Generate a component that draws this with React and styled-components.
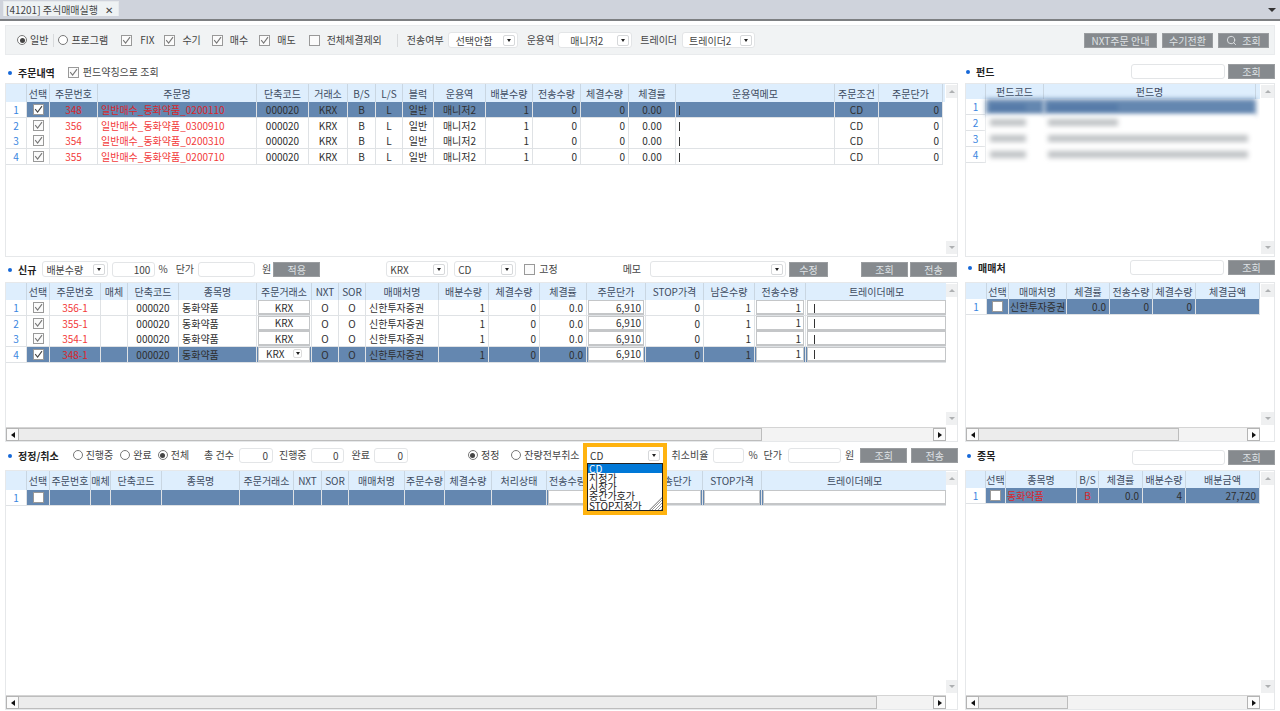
import React from 'react';
import styled, { createGlobalStyle } from 'styled-components';
import { Search } from 'lucide-react';

const GlobalStyle = createGlobalStyle`
    html, body {
        margin: 0;
        padding: 0;
        background: #fff;
    }
    body {
        font-family: "Noto Sans CJK KR", "Noto Sans", sans-serif;
        font-size: 10px;
        color: #333;
        overflow: hidden;
    }
    * { box-sizing: border-box; }
`;

const Page = styled.div`
    position: relative;
    width: 1280px;
    height: 711px;
    overflow: hidden;
`;

const TabBar = styled.div`
    display: flex;
    align-items: flex-end;
    justify-content: space-between;
    height: 21px;
    padding: 0 4px 3px 3px;
    background: #cfd3dc;
    border-bottom: 2px solid #7d7f82;
`;

const Tab = styled.div`
    display: flex;
    align-items: center;
    justify-content: space-between;
    width: 116px;
    height: 15px;
    padding: 0 5px 0 2px;
    background: #eef2f4;
    border: 1px solid #e6e9ec;
    border-bottom: 0;
    font-size: 10px;
    color: #444;
    white-space: nowrap;
`;

const TabMenu = styled.span`
    width: 0;
    height: 0;
    margin-bottom: 4px;
    border-left: 4px solid transparent;
    border-right: 4px solid transparent;
    border-top: 4px solid #333;
`;

const MainBar = styled.div`
    display: flex;
    align-items: center;
    height: 30px;
    margin: 4px 5px 0;
    padding: 0 5px 0 6px;
    background: #f1f3f4;
    border: 1px solid #e9ebed;
`;

const Columns = styled.div`
    display: flex;
    gap: 7px;
    padding-left: 5px;
`;

const Col = styled.div`
    display: flex;
    flex-direction: column;
    width: ${p => p.$w}px;
    flex: none;
`;

const SectionBar = styled.div`
    display: flex;
    align-items: center;
    height: ${p => p.$h}px;
    padding-bottom: ${p => p.$pb || 0}px;
    padding-top: ${p => p.$pt || 0}px;
    padding-left: ${p => p.$pl ?? 3}px;
`;

const Title = styled.span`
    position: relative;
    padding-left: 10px;
    margin-left: ${p => p.$ml || 0}px;
    margin-bottom: ${p => p.$mb || 0}px;
    font-weight: 700;
    font-size: 10px;
    color: #222;
    white-space: nowrap;
    &::before {
        content: '';
        position: absolute;
        left: 0;
        top: 6px;
        width: 4px;
        height: 4px;
        border-radius: 50%;
        background: #1668d8;
    }
`;

const Label = styled.span`
    margin-left: ${p => p.$ml || 0}px;
    color: #444;
    white-space: nowrap;
    line-height: 14px;
`;

const Divider = styled.span`
    width: 1px;
    height: 13px;
    margin-left: ${p => p.$ml || 0}px;
    background: #d8dadc;
`;

const Spring = styled.span`
    flex: 1;
`;

const RadioDot = styled.span`
    flex: none;
    width: 10px;
    height: 10px;
    margin-left: ${p => p.$ml || 0}px;
    margin-right: 3px;
    border: 1px solid #777;
    border-radius: 50%;
    background: #fff;
    display: flex;
    align-items: center;
    justify-content: center;
    &::after {
        content: '';
        display: ${p => (p.$on ? 'block' : 'none')};
        width: 5px;
        height: 5px;
        border-radius: 50%;
        background: #444;
    }
`;

const CheckBox = styled.span`
    flex: none;
    display: flex;
    align-items: center;
    justify-content: center;
    width: ${p => p.$size || 11}px;
    height: ${p => p.$size || 11}px;
    margin-left: ${p => p.$ml || 0}px;
    margin-right: ${p => p.$mr || 0}px;
    border: 1px solid #999;
    background: ${p => (p.$white ? '#fff' : '#fbfbfb')};
`;

const Check = ({ on, white, ml, mr }) => (
    <CheckBox $white={white} $ml={ml} $mr={mr}>
        {on && (
            <svg width="9" height="9" viewBox="0 0 9 9">
                <polyline points="1.2,4.2 3.6,7 8,1.2" fill="none" stroke={white ? '#444' : '#777'} strokeWidth="1.1" />
            </svg>
        )}
    </CheckBox>
);

const SelectBox = styled.div`
    flex: none;
    display: flex;
    align-items: center;
    justify-content: space-between;
    width: ${p => p.$w}px;
    height: 16px;
    margin-left: ${p => p.$ml || 0}px;
    padding: 0 2px 0 ${p => p.$pl ?? 3}px;
    background: #fff;
    border: 1px solid #e3e5e7;
    border-radius: 3px;
    color: #444;
    white-space: nowrap;
`;

const SelectArrow = styled.span`
    flex: none;
    display: flex;
    align-items: center;
    justify-content: center;
    width: 12px;
    height: 11px;
    background: #fff;
    border: 1px solid #d6d8da;
    border-radius: 2px;
    &::after {
        content: '';
        border-left: 2.5px solid transparent;
        border-right: 2.5px solid transparent;
        border-top: 3px solid #222;
    }
`;

const Select = ({ w, ml, pl, children }) => (
    <SelectBox $w={w} $ml={ml} $pl={pl}>
        <span>{children}</span>
        <SelectArrow />
    </SelectBox>
);

const Input = styled.div`
    flex: none;
    width: ${p => p.$w}px;
    height: 15px;
    margin-left: ${p => p.$ml || 0}px;
    padding: 0 4px;
    line-height: 13px;
    text-align: right;
    background: #fff;
    border: 1px solid #e3e5e7;
    border-radius: 3px;
    color: #444;
`;

const Button = styled.div`
    flex: none;
    display: flex;
    align-items: center;
    justify-content: center;
    gap: 5px;
    width: ${p => p.$w}px;
    height: 15px;
    margin-left: ${p => p.$ml || 0}px;
    background: #868a8e;
    border: 1px solid #9a9da0;
    color: #dfe2e5;
    white-space: nowrap;
`;

const Frame = styled.div`
    display: flex;
    flex-direction: column;
    height: ${p => p.$h}px;
    border: 1px solid #e6e8ea;
    background: #fff;
`;

const FrameBody = styled.div`
    flex: 1;
    min-height: 0;
    display: flex;
`;

const Table = styled.div`
    flex: 1;
    min-width: 0;
    overflow: hidden;
`;

const Row = styled.div`
    display: grid;
    grid-template-columns: ${p => p.$cols.map(c => `${c}px`).join(' ')};
    height: ${p => p.$h}px;
`;

const HeadRow = styled(Row)`
    background: #deeefd;
`;

const HeadCell = styled.div`
    display: flex;
    align-items: center;
    justify-content: center;
    border-right: 1px solid #c9d6e2;
    color: #3d4b60;
    white-space: nowrap;
    overflow: hidden;
`;

const BodyCell = styled.div`
    display: flex;
    align-items: center;
    justify-content: ${p => ({ l: 'flex-start', r: 'flex-end', c: 'center' }[p.$align])};
    padding: 0 ${p => (p.$tight ? 1 : 3)}px;
    background: ${p => (p.$sel ? '#6487b0' : '#fff')};
    border-right: 1px solid #dfe2e5;
    border-bottom: 1px solid #dfe2e5;
    color: ${p => (p.$red ? (p.$sel ? '#d9262b' : '#f23a3a') : '#2f2f2f')};
    white-space: nowrap;
    overflow: hidden;
`;

const RowNum = styled.div`
    display: flex;
    align-items: center;
    justify-content: center;
    background: #fff;
    border-right: 1px solid #dfe2e5;
    border-bottom: 1px solid #dfe2e5;
    color: #3a86e0;
`;

const CellBox = styled.div`
    display: flex;
    align-items: center;
    justify-content: ${p => ({ l: 'flex-start', r: 'flex-end', c: 'center' }[p.$align])};
    width: 100%;
    height: 100%;
    padding: 0 ${p => (p.$pad ?? 2)}px;
    background: #fff;
    border: 1px solid #c4c6c8;
    border-bottom-width: 2px;
    color: #2f2f2f;
`;

const ComboText = styled.span`
    flex: 1;
`;

const CaretMark = styled.span`
    width: 1px;
    height: 9px;
    margin-top: 2px;
    background: #333;
`;

const ComboArrow = styled(SelectArrow)`
    width: 9px;
    height: 9px;
    border-color: #ddd;
`;

const VScroll = styled.div`
    flex: none;
    display: flex;
    flex-direction: column;
    justify-content: space-between;
    width: ${p => p.$w}px;
    padding: 1px 0 2px ${p => p.$pl ?? 1}px;
`;

const VArrow = styled.span`
    display: flex;
    align-items: center;
    justify-content: center;
    height: 13px;
    background: #eff0f1;
    &::after {
        content: '';
        border-left: 3px solid transparent;
        border-right: 3px solid transparent;
        ${p => (p.$down ? 'border-top' : 'border-bottom')}: 3px solid #aeb0b2;
    }
`;

const HScroll = styled.div`
    flex: none;
    display: flex;
    align-items: stretch;
    height: 14px;
    margin-right: ${p => p.$mr || 0}px;
    background: #f3f3f3;
    border-top: 1px solid #d4d4d4;
`;

const HArrow = styled.span`
    flex: none;
    display: flex;
    align-items: center;
    justify-content: center;
    width: 13px;
    margin-left: ${p => (p.$left ? 0 : 'auto')};
    background: #fbfbfb;
    border: 1px solid #b4b4b4;
    &::after {
        content: '';
        border-top: 3px solid transparent;
        border-bottom: 3px solid transparent;
        ${p => (p.$left ? 'border-right' : 'border-left')}: 4px solid #111;
    }
`;

const HThumb = styled.span`
    flex: none;
    width: ${p => p.$w}px;
    background: #ececec;
    border: 1px solid #bdbdbd;
    border-left: 0;
`;

// 펀드 목록은 원본에서 가려져 있음
const BlurCell = styled.div`
    display: flex;
    align-items: center;
    padding: 0 4px;
    background: ${p => (p.$sel ? '#6487b0' : '#fff')};
    filter: blur(2.5px);
`;

const BlurBar = styled.span`
    height: 7px;
    width: ${p => p.$w}px;
    background: ${p => (p.$sel ? '#557aa8' : '#bfc2c5')};
`;

// 드롭다운 펼쳐진 부분 - 그리드 위로 겹침
const Callout = styled.div`
    position: absolute;
    left: 583px;
    top: 443px;
    width: 84px;
    height: 72px;
    background: #fff;
    border: 4px solid #ffb30f;
    z-index: 5;
`;

const CalloutSelect = styled.div`
    display: flex;
    align-items: center;
    justify-content: space-between;
    height: 16px;
    padding: 0 3px 0 3px;
    color: #333;
`;

const OptionList = styled.div`
    position: relative;
    height: 48px;
    background: #fff;
    border: 1px solid #222;
    overflow: hidden;
`;

const Option = styled.div`
    height: ${p => p.$h || 9}px;
    padding-left: 1px;
    line-height: 9px;
    white-space: nowrap;
    background: ${p => (p.$on ? '#0078d7' : 'transparent')};
    color: ${p => (p.$on ? '#fff' : '#222')};
`;

const ResizeGrip = styled.span`
    position: absolute;
    right: 0;
    bottom: 0;
    width: 13px;
    height: 13px;
    background: repeating-linear-gradient(135deg, transparent 0 1px, #9a9a9a 1px 2px);
    clip-path: polygon(100% 0, 100% 100%, 0 100%);
`;

// 컬럼 정의
const ORDER_COLS = [21, 23, 48, 159, 52, 39, 28, 27, 31, 52, 47, 48, 48, 47, 159, 44, 64, 4];
const ORDER_HEAD = ['', '선택', '주문번호', '주문명', '단축코드', '거래소', 'B/S', 'L/S', '블럭', '운용역', '배분수량', '전송수량', '체결수량', '체결률', '운용역메모', '주문조건', '주문단가', ''];
const ORDERS = [
    ['348', '일반매수_동화약품_0200110'],
    ['356', '일반매수_동화약품_0300910'],
    ['354', '일반매수_동화약품_0200310'],
    ['355', '일반매수_동화약품_0200710'],
];

const NEW_COLS = [21, 23, 51, 27, 51, 78, 55, 27, 27, 73, 50, 51, 47, 59, 58, 51, 51, 142];
const NEW_HEAD = ['', '선택', '주문번호', '매체', '단축코드', '종목명', '주문거래소', 'NXT', 'SOR', '매매처명', '배분수량', '체결수량', '체결률', '주문단가', 'STOP가격', '남은수량', '전송수량', '트레이더메모'];
const NEW_ORDERS = ['356-1', '355-1', '354-1', '348-1'];

const EDIT_COLS = [21, 23, 41, 20, 51, 78, 54, 28, 27, 56, 40, 47, 55, 42, 55, 59, 59, 186];
const EDIT_HEAD = ['', '선택', '주문번호', '매체', '단축코드', '종목명', '주문거래소', 'NXT', 'SOR', '매매처명', '주문수량', '체결수량', '처리상태', '전송수량', '주문조건', '전송단가', 'STOP가격', '트레이더메모'];

const FUND_COLS = [20, 58, 212];
const BROKER_COLS = [21, 22, 58, 43, 43, 43, 64];
const STOCK_COLS = [20, 20, 71, 22, 44, 43, 74];

const fundBars = [
    [36, 70],
    [36, 70],
    [36, 200],
    [36, 200],
];

const Head = ({ cols, labels, h }) => (
    <HeadRow $cols={cols} $h={h}>
        {labels.map((label, i) => <HeadCell key={i}>{label}</HeadCell>)}
    </HeadRow>
);

const Scrollbars = ({ w, pl }) => (
    <VScroll $w={w} $pl={pl}>
        <VArrow />
        <VArrow $down />
    </VScroll>
);

const Hbar = ({ thumb, mr }) => (
    <HScroll $mr={mr}>
        <HArrow $left />
        <HThumb $w={thumb} />
        <HArrow />
    </HScroll>
);

function OrderTable() {
    return (
        <Table>
            <Head cols={ORDER_COLS} labels={ORDER_HEAD} h={18} />
            {ORDERS.map(([no, name], i) => {
                const sel = i === 0;
                const cells = [
                    ['000020', 'c'], ['KRX', 'c'], ['B', 'c'], ['L', 'c'], ['일반', 'c'], ['매니저2', 'c'],
                    ['1', 'r'], ['0', 'r'], ['0', 'r'], ['0.00', 'c'],
                ];
                return (
                    <Row key={no} $cols={ORDER_COLS} $h={15.67}>
                        <RowNum>{i + 1}</RowNum>
                        <BodyCell $align="c" $sel={sel}><Check on white={sel} /></BodyCell>
                        <BodyCell $align="c" $sel={sel} $red>{no}</BodyCell>
                        <BodyCell $align="l" $sel={sel} $red>{name}</BodyCell>
                        {cells.map(([v, a], k) => <BodyCell key={k} $align={a} $sel={sel}>{v}</BodyCell>)}
                        <BodyCell $align="l" $sel={sel}><CaretMark /></BodyCell>
                        <BodyCell $align="c" $sel={sel}>CD</BodyCell>
                        <BodyCell $align="r" $sel={sel}>0</BodyCell>
                    </Row>
                );
            })}
        </Table>
    );
}

function NewTable() {
    return (
        <Table>
            <Head cols={NEW_COLS} labels={NEW_HEAD} h={17} />
            {NEW_ORDERS.map((no, i) => {
                const sel = i === 3;
                return (
                    <Row key={no} $cols={NEW_COLS} $h={15.67}>
                        <RowNum>{i + 1}</RowNum>
                        <BodyCell $align="c" $sel={sel}><Check on white={sel} /></BodyCell>
                        <BodyCell $align="c" $sel={sel} $red>{no}</BodyCell>
                        <BodyCell $align="c" $sel={sel} />
                        <BodyCell $align="c" $sel={sel}>000020</BodyCell>
                        <BodyCell $align="l" $sel={sel}>동화약품</BodyCell>
                        <BodyCell $align="c" $sel={sel} $tight>
                            {sel
                                ? <CellBox $align="l" $pad={7}><ComboText>KRX</ComboText><ComboArrow /></CellBox>
                                : <CellBox $align="c">KRX</CellBox>}
                        </BodyCell>
                        <BodyCell $align="c" $sel={sel}>O</BodyCell>
                        <BodyCell $align="c" $sel={sel}>O</BodyCell>
                        <BodyCell $align="l" $sel={sel}>신한투자증권</BodyCell>
                        <BodyCell $align="r" $sel={sel}>1</BodyCell>
                        <BodyCell $align="r" $sel={sel}>0</BodyCell>
                        <BodyCell $align="r" $sel={sel}>0.0</BodyCell>
                        <BodyCell $align="r" $sel={sel} $tight><CellBox $align="r">6,910</CellBox></BodyCell>
                        <BodyCell $align="r" $sel={sel}>0</BodyCell>
                        <BodyCell $align="r" $sel={sel}>1</BodyCell>
                        <BodyCell $align="r" $sel={sel} $tight><CellBox $align="r">1</CellBox></BodyCell>
                        <BodyCell $align="l" $sel={sel} $tight><CellBox $align="l" $pad={6}><CaretMark /></CellBox></BodyCell>
                    </Row>
                );
            })}
        </Table>
    );
}

function EditTable() {
    return (
        <Table>
            <Head cols={EDIT_COLS} labels={EDIT_HEAD} h={19} />
            <Row $cols={EDIT_COLS} $h={16}>
                <RowNum>1</RowNum>
                <BodyCell $align="c" $sel><Check white /></BodyCell>
                {EDIT_HEAD.slice(2).map((label, k) => {
                    const boxed = k >= 11;
                    return (
                        <BodyCell key={label} $align="c" $sel $tight={boxed}>
                            {boxed && <CellBox $align="c" />}
                        </BodyCell>
                    );
                })}
            </Row>
        </Table>
    );
}

function FundTable() {
    return (
        <Table>
            <Head cols={FUND_COLS} labels={['', '펀드코드', '펀드명']} h={15} />
            {fundBars.map(([a, b], i) => (
                <Row key={i} $cols={FUND_COLS} $h={15.9}>
                    <RowNum>{i + 1}</RowNum>
                    <BlurCell $sel={i === 0}><BlurBar $sel={i === 0} $w={a} /></BlurCell>
                    <BlurCell $sel={i === 0}><BlurBar $sel={i === 0} $w={b} /></BlurCell>
                </Row>
            ))}
        </Table>
    );
}

function BrokerTable() {
    return (
        <Table>
            <Head cols={BROKER_COLS} labels={['', '선택', '매매처명', '체결률', '전송수량', '체결수량', '체결금액']} h={16} />
            <Row $cols={BROKER_COLS} $h={16}>
                <RowNum>1</RowNum>
                <BodyCell $align="c" $sel><Check white /></BodyCell>
                <BodyCell $align="l" $sel $tight>신한투자증권</BodyCell>
                <BodyCell $align="r" $sel>0.0</BodyCell>
                <BodyCell $align="r" $sel>0</BodyCell>
                <BodyCell $align="r" $sel>0</BodyCell>
                <BodyCell $align="r" $sel />
            </Row>
        </Table>
    );
}

function StockTable() {
    return (
        <Table>
            <Head cols={STOCK_COLS} labels={['', '선택', '종목명', 'B/S', '체결률', '배분수량', '배분금액']} h={17} />
            <Row $cols={STOCK_COLS} $h={16}>
                <RowNum>1</RowNum>
                <BodyCell $align="c" $sel><Check white /></BodyCell>
                <BodyCell $align="l" $sel $red $tight>동화약품</BodyCell>
                <BodyCell $align="c" $sel $red>B</BodyCell>
                <BodyCell $align="r" $sel>0.0</BodyCell>
                <BodyCell $align="r" $sel>4</BodyCell>
                <BodyCell $align="r" $sel>27,720</BodyCell>
            </Row>
        </Table>
    );
}

export default function App() {
    return (
        <Page>
            <GlobalStyle />
            <TabBar>
                <Tab>
                    <span>[41201] 주식매매실행</span>
                    <span>✕</span>
                </Tab>
                <TabMenu />
            </TabBar>

            <MainBar>
                <RadioDot $ml={5} $on /><Label>일반</Label>
                <Divider $ml={5} />
                <RadioDot $ml={4} /><Label>프로그램</Label>
                <Check on ml={13} mr={8} /><Label>FIX</Label>
                <Check on ml={10} mr={7} /><Label>수기</Label>
                <Check on ml={11} mr={7} /><Label>매수</Label>
                <Check on ml={11} mr={7} /><Label>매도</Label>
                <Check ml={13} mr={7} /><Label>전체체결제외</Label>
                <Divider $ml={15} />
                <Label $ml={9}>전송여부</Label>
                <Select w={70} ml={4} pl={7}>선택안함</Select>
                <Label $ml={9}>운용역</Label>
                <Select w={74} ml={4} pl={11}>매니저2</Select>
                <Label $ml={8}>트레이더</Label>
                <Select w={73} ml={5} pl={6}>트레이더2</Select>
                <Spring />
                <Button $w={73}>NXT주문 안내</Button>
                <Button $w={51} $ml={5}>수기전환</Button>
                <Button $w={51} $ml={5}><Search size={11} strokeWidth={2} />조회</Button>
            </MainBar>

            <Columns>
                <Col $w={953}>
                    <SectionBar $h={28} $pt={6}>
                        <Title>주문내역</Title>
                        <Check on ml={13} mr={4} /><Label>펀드약칭으로 조회</Label>
                    </SectionBar>
                    <Frame $h={174}>
                        <FrameBody>
                            <OrderTable />
                            <Scrollbars w={12} />
                        </FrameBody>
                    </Frame>

                    <SectionBar $h={25} $pb={1}>
                        <Title>신규</Title>
                        <Select w={66} ml={6}>배분수량</Select>
                        <Input $w={43} $ml={4}>100</Input>
                        <Label $ml={3}>%</Label>
                        <Label $ml={8}>단가</Label>
                        <Input $w={57} $ml={4} />
                        <Label $ml={7}>원</Label>
                        <Button $w={47} $ml={2}>적용</Button>
                        <Select w={62} ml={66}>KRX</Select>
                        <Select w={62} ml={6}>CD</Select>
                        <Check ml={8} mr={4} /><Label>고정</Label>
                        <Label $ml={65}>메모</Label>
                        <Select w={136} ml={9} />
                        <Button $w={39} $ml={3}>수정</Button>
                        <Button $w={47} $ml={33}>조회</Button>
                        <Button $w={47} $ml={2}>전송</Button>
                    </SectionBar>
                    <Frame $h={160}>
                        <FrameBody>
                            <NewTable />
                            <Scrollbars w={11} pl={0} />
                        </FrameBody>
                        <Hbar thumb={743} mr={11} />
                    </Frame>

                    <SectionBar $h={28} $pb={2}>
                        <Title>정정/취소</Title>
                        <RadioDot $ml={14} /><Label>진행중</Label>
                        <RadioDot $ml={7} /><Label>완료</Label>
                        <RadioDot $ml={6} $on /><Label>전체</Label>
                        <Label $ml={15}>총 건수</Label>
                        <Input $w={34} $ml={5}>0</Input>
                        <Label $ml={6}>진행중</Label>
                        <Input $w={33} $ml={4}>0</Input>
                        <Label $ml={8}>완료</Label>
                        <Input $w={34} $ml={4}>0</Input>
                        <RadioDot $ml={60} $on /><Label>정정</Label>
                        <RadioDot $ml={12} /><Label>잔량전부취소</Label>
                        <Label $ml={92}>취소비율</Label>
                        <Input $w={31} $ml={5} />
                        <Label $ml={4}>%</Label>
                        <Label $ml={6}>단가</Label>
                        <Input $w={53} $ml={6} />
                        <Label $ml={4}>원</Label>
                        <Button $w={47} $ml={6}>조회</Button>
                        <Button $w={47} $ml={4}>전송</Button>
                    </SectionBar>
                    <Frame $h={240}>
                        <FrameBody>
                            <EditTable />
                            <Scrollbars w={11} pl={0} />
                        </FrameBody>
                        <Hbar thumb={858} mr={11} />
                    </Frame>
                </Col>

                <Col $w={310}>
                    <SectionBar $h={28} $pt={5} $pl={0}>
                        <Title $ml={1}>펀드</Title>
                        <Spring />
                        <Input $w={94} />
                        <Button $w={47} $ml={3}>조회</Button>
                    </SectionBar>
                    <Frame $h={174}>
                        <FrameBody>
                            <FundTable />
                            <Scrollbars w={14} pl={1} />
                        </FrameBody>
                    </Frame>

                    <SectionBar $h={25} $pb={4} $pl={0}>
                        <Title $ml={3}>매매처</Title>
                        <Spring />
                        <Input $w={94} />
                        <Button $w={47} $ml={4}>조회</Button>
                    </SectionBar>
                    <Frame $h={160}>
                        <FrameBody>
                            <BrokerTable />
                            <Scrollbars w={14} pl={1} />
                        </FrameBody>
                        <Hbar thumb={200} mr={14} />
                    </Frame>

                    <SectionBar $h={28} $pt={3} $pl={0}>
                        <Title $ml={2} $mb={5}>종목</Title>
                        <Spring />
                        <Input $w={93} />
                        <Button $w={47} $ml={3}>조회</Button>
                    </SectionBar>
                    <Frame $h={240}>
                        <FrameBody>
                            <StockTable />
                            <Scrollbars w={14} pl={1} />
                        </FrameBody>
                        <Hbar thumb={89} mr={14} />
                    </Frame>
                </Col>
            </Columns>

            <Callout>
                <CalloutSelect>
                    <span>CD</span>
                    <SelectArrow />
                </CalloutSelect>
                <OptionList>
                    <Option $on>CD</Option>
                    <Option>지정가</Option>
                    <Option>시장가</Option>
                    <Option $h={10}>중간가호가</Option>
                    <Option>STOP지정가</Option>
                    <ResizeGrip />
                </OptionList>
            </Callout>
        </Page>
    );
}
